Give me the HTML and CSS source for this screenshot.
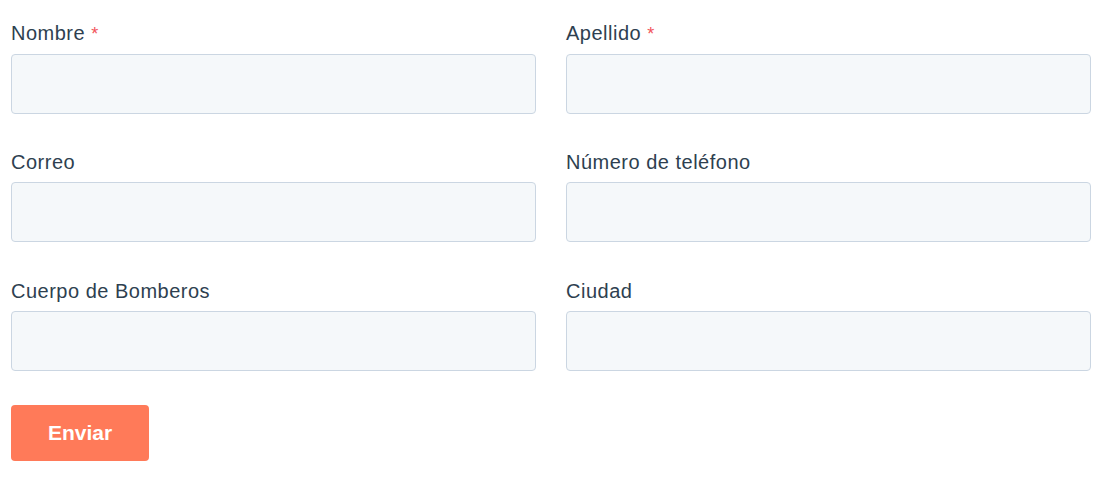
FILE: index.html
```html
<!DOCTYPE html>
<html lang="es">
<head>
<meta charset="utf-8">
<link rel="stylesheet" href="styles.css">
</head>
<body>
<form class="form">
  <div class="grid">
    <div class="field">
      <label class="label">Nombre <span class="req">*</span></label>
      <input class="input" type="text">
    </div>
    <div class="field">
      <label class="label">Apellido <span class="req">*</span></label>
      <input class="input" type="text">
    </div>
    <div class="field">
      <label class="label">Correo</label>
      <input class="input" type="text">
    </div>
    <div class="field">
      <label class="label">Número de teléfono</label>
      <input class="input" type="text">
    </div>
    <div class="field">
      <label class="label">Cuerpo de Bomberos</label>
      <input class="input" type="text">
    </div>
    <div class="field">
      <label class="label">Ciudad</label>
      <input class="input" type="text">
    </div>
  </div>
  <button class="submit" type="button">Enviar</button>
</form>
</body>
</html>
```
FILE: styles.css
```css
* { box-sizing: border-box; }
html, body { margin: 0; background: #fff; }
body {
  font-family: "Liberation Sans", Arial, sans-serif;
  color: #33475b;
}
.form {
  padding: 20px 18px 0 11px;
}
.grid {
  display: grid;
  grid-template-columns: 525px 525px;
  column-gap: 30px;
  row-gap: 9px;
}
.field {
  display: flex;
  flex-direction: column;
  height: 120px;
}
.label {
  font-size: 20px;
  letter-spacing: 0.5px;
  line-height: 26px;
  margin-bottom: 7px;
  color: #2e3f50;
}
.req {
  color: #f2545b;
  font-size: 18px;
}
.input {
  height: 60px;
  width: 100%;
  background: #f5f8fa;
  border: 1px solid #cbd6e2;
  border-radius: 4px;
  margin: 0;
  padding: 0 12px;
  font: inherit;
}
.submit {
  display: block;
  margin-top: 7px;
  width: 138px;
  height: 56px;
  background: #ff7a59;
  border: none;
  border-radius: 4px;
  color: #fff;
  font-family: "Liberation Sans", Arial, sans-serif;
  font-weight: bold;
  font-size: 21px;
  cursor: pointer;
}
```
